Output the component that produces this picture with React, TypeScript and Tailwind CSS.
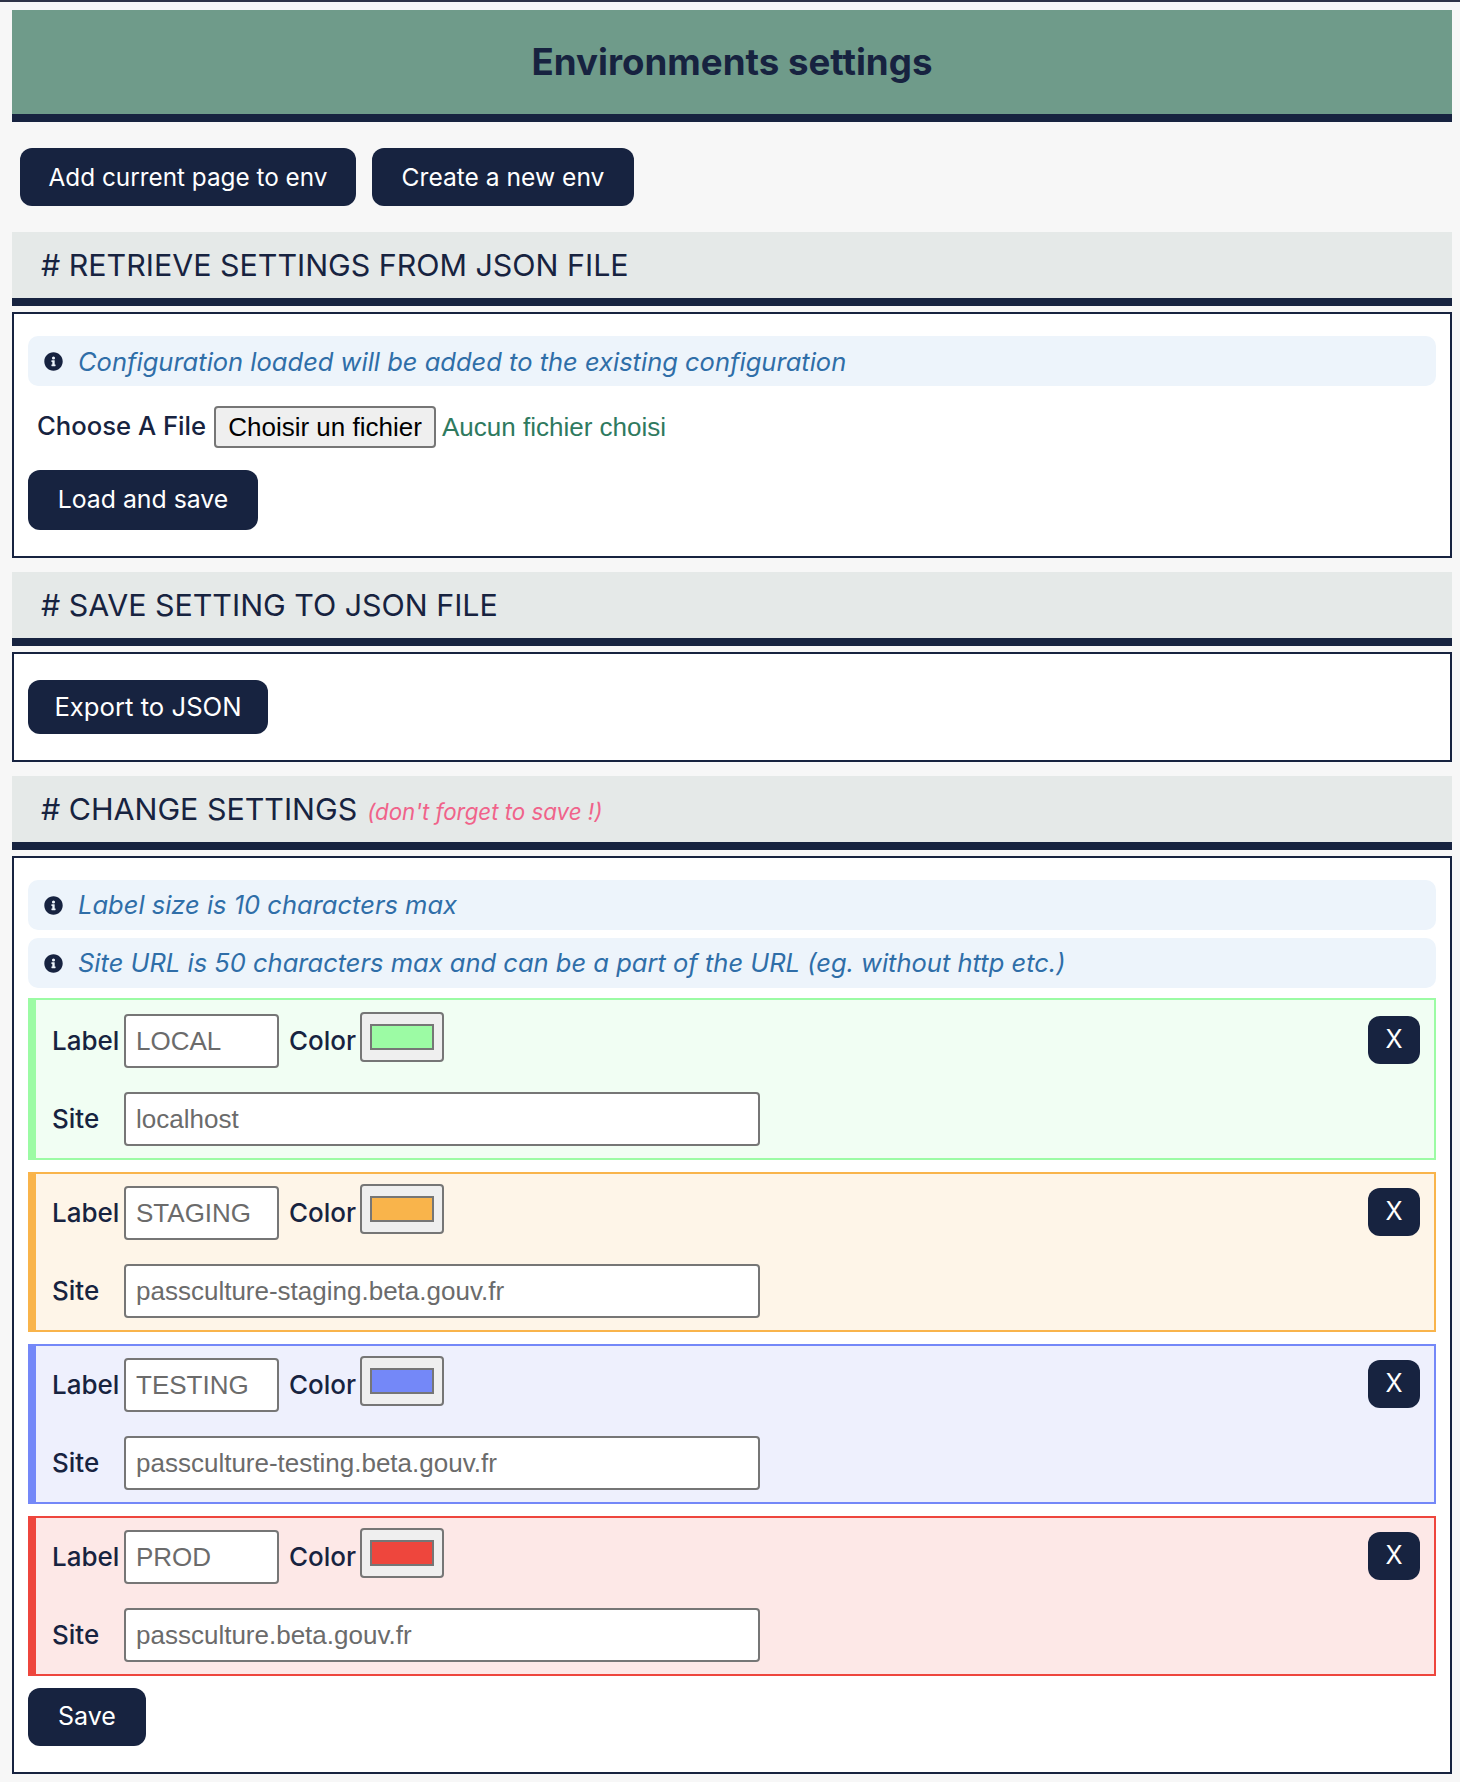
const BTN = "bg-[#172340] text-white rounded-[12px] font-normal";

function InfoIcon() {
  return (
    <svg className="w-[19px] h-[19px] shrink-0" viewBox="0 0 512 512" fill="#172340">
      <path d="M256 8C119 8 8 119 8 256s111 248 248 248 248-111 248-248S393 8 256 8zm0 110a42 42 0 1 1 0 84 42 42 0 0 1 0-84zm56 254c0 7-5 12-12 12h-88c-7 0-12-5-12-12v-24c0-7 5-12 12-12h12v-64h-12c-7 0-12-5-12-12v-24c0-7 5-12 12-12h64c7 0 12 5 12 12v100h12c7 0 12 5 12 12v24z" />
    </svg>
  );
}

function Info({ children, textClass = "" }: { children: string; textClass?: string }) {
  return (
    <div className="flex items-center h-[50px] pl-[16px] rounded-[10px] bg-[#edf4fb]">
      <InfoIcon />
      <span className={`ml-[15px] text-[25.5px] italic text-[#2f6ea8] ${textClass}`}>{children}</span>
    </div>
  );
}

function SectionTitle({ children }: { children: React.ReactNode }) {
  return (
    <div className="flex items-center h-[74px] pl-[29px] pt-[2px] bg-[#e5e9e8] border-b-[8px] border-[#172340] text-[30.4px] text-[#172340]">
      {children}
    </div>
  );
}

const ENVS = [
  { label: "LOCAL", site: "localhost", border: "border-[#9cfba4]", bg: "bg-[#f1fef3]", swatch: "bg-[#9cfba4]" },
  { label: "STAGING", site: "passculture-staging.beta.gouv.fr", border: "border-[#f9b44b]", bg: "bg-[#fef5e8]", swatch: "bg-[#f9b44b]" },
  { label: "TESTING", site: "passculture-testing.beta.gouv.fr", border: "border-[#7488f8]", bg: "bg-[#eef0fd]", swatch: "bg-[#7488f8]" },
  { label: "PROD", site: "passculture.beta.gouv.fr", border: "border-[#ee463d]", bg: "bg-[#fde8e7]", swatch: "bg-[#ee463d]" },
];

function EnvCard({ env }: { env: (typeof ENVS)[number] }) {
  const inputCls =
    "h-[54px] px-[10px] bg-white border-2 border-[#767676] rounded-[4px] text-[26px] text-[#6b6b6b] font-['Liberation_Sans',sans-serif] outline-none";
  return (
    <div className={`group relative border-2 border-l-[8px] ${env.border} ${env.bg} pl-[16px] pt-[12px] first:pt-[14px] pb-[12px]`}>
      <div className="flex items-center h-[54px] text-[26px] font-medium text-[#172340]">
        <span className="w-[72px] pb-[2px]">Label</span>
        <input readOnly value={env.label} className={`${inputCls} w-[155px]`} />
        <span className="ml-[10px] w-[71px] pb-[2px]">Color</span>
        <span className="relative -top-[4px] flex items-center justify-center w-[84px] h-[50px] bg-[#efefef] border-2 border-[#767676] rounded-[4px]">
          <span className={`block w-[64px] h-[26px] border-2 border-[#767676] ${env.swatch}`} />
        </span>
      </div>
      <div className="flex items-center h-[54px] mt-[24px] text-[26px] font-medium text-[#172340]">
        <span className="w-[72px] pb-[2px]">Site</span>
        <input readOnly value={env.site} className={`${inputCls} w-[636px]`} />
      </div>
      <button className={`absolute top-[14px] group-first:top-[16px] right-[14px] w-[52px] h-[48px] text-[25px] ${BTN}`}>X</button>
    </div>
  );
}

export default function App() {
  return (
    <div className="min-h-[1782px] bg-[#f7f7f7] border-t-2 border-[#2e3347] pt-[8px] pl-3 pr-2 font-['Inter',sans-serif]">
      <div className="flex items-center justify-center h-[112px] bg-[#6f9b8a] border-b-[8px] border-[#172340]">
        <h1 className="text-[36.7px] font-bold text-[#172340]">Environments settings</h1>
      </div>

      <div className="flex gap-4 pl-2 mt-[26px] mb-[26px]">
        <button className={`h-[58px] w-[336px] text-[24.3px] ${BTN}`}>Add current page to env</button>
        <button className={`h-[58px] w-[262px] text-[24.6px] ${BTN}`}>Create a new env</button>
      </div>

      <SectionTitle># RETRIEVE SETTINGS FROM JSON FILE</SectionTitle>
      <div className="h-[246px] mt-[6px] mb-[14px] bg-white border-2 border-[#172340] px-[14px] pt-[22px]">
        <Info textClass="pt-[2px]">Configuration loaded will be added to the existing configuration</Info>
        <div className="flex items-center h-[42px] mt-[20px] pl-[9px] text-[25.65px] font-medium text-[#172340]">
          <span className="pb-[2px]">Choose A File</span>
          <span className="ml-[8px] flex items-center justify-center w-[222px] h-[42px] bg-[#efefef] border-2 border-[#767676] rounded-[4px] text-[26px] font-normal text-black font-['Liberation_Sans',sans-serif]">
            Choisir un fichier
          </span>
          <span className="ml-[6px] text-[26px] font-normal text-[#2f7a5f] font-['Liberation_Sans',sans-serif]">Aucun fichier choisi</span>
        </div>
        <button className={`h-[60px] w-[230px] mt-[22px] text-[24.8px] ${BTN}`}>Load and save</button>
      </div>

      <SectionTitle># SAVE SETTING TO JSON FILE</SectionTitle>
      <div className="h-[110px] mt-[6px] mb-[14px] bg-white border-2 border-[#172340] px-[14px] pt-[26px]">
        <button className={`h-[54px] w-[240px] text-[25.7px] ${BTN}`}>Export to JSON</button>
      </div>

      <SectionTitle>
        # CHANGE SETTINGS
        <span className="ml-[10px] mt-[4px] text-[22.3px] italic text-[#f0638a]">(don't forget to save !)</span>
      </SectionTitle>
      <div className="mt-[6px] h-[918px] bg-white border-2 border-[#172340] px-[14px] pt-[22px]">
        <div className="flex flex-col gap-2">
          <Info>Label size is 10 characters max</Info>
          <Info>Site URL is 50 characters max and can be a part of the URL (eg. without http etc.)</Info>
        </div>
        <div className="flex flex-col gap-[12px] mt-[10px]">
          {ENVS.map((env) => (
            <EnvCard key={env.label} env={env} />
          ))}
        </div>
        <button className={`h-[58px] w-[118px] mt-[12px] text-[25px] ${BTN}`}>Save</button>
      </div>
    </div>
  );
}
